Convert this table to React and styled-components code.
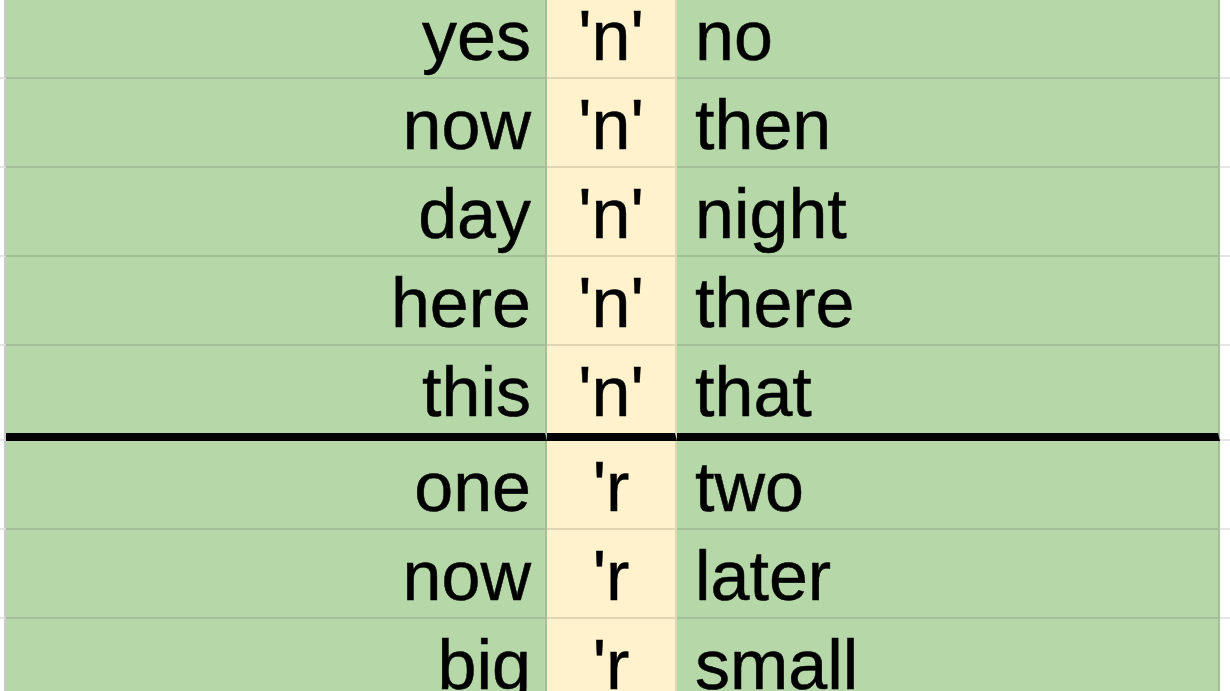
import React from "react";
import styled, { createGlobalStyle } from "styled-components";

const Global = createGlobalStyle`
  html, body { margin: 0; padding: 0; background: #ffffff; overflow: hidden; }
  #root { width: 1230px; height: 691px; overflow: hidden; }
`;

const Sheet = styled.div`
  display: flex;
  flex-direction: column;
  margin-top: -10px;
  font-family: "Liberation Sans", Arial, sans-serif;
  font-size: 70px;
  color: #000;
  -webkit-text-stroke: 0.5px #000;
`;

const Row = styled.div`
  display: grid;
  grid-template-columns: 6px 541px 130px 543px 1fr;
  height: ${(p) => (p.$thick ? 95 : 89)}px;
`;

const Cell = styled.div`
  box-sizing: border-box;
  display: flex;
  align-items: flex-end;
  line-height: 70px;
  padding-bottom: 6px;
  white-space: nowrap;
  overflow: hidden;
  background: ${(p) =>
    p.$kind === "green" ? "#b6d7a8" : p.$kind === "cream" ? "#fff2cc" : "#ffffff"};
  justify-content: ${(p) =>
    p.$align === "right" ? "flex-end" : p.$align === "center" ? "center" : "flex-start"};
  padding-left: ${(p) => (p.$align === "left" ? 18 : 0)}px;
  padding-right: ${(p) => (p.$align === "right" ? 14 : 0)}px;
  border-right: 2px solid
    ${(p) => (p.$kind === "blank" ? "#c9c9c9" : "rgba(60, 70, 50, 0.16)")};
  border-bottom: ${(p) =>
    p.$thick
      ? "8px solid #000"
      : p.$kind === "blank"
      ? "2px solid #e3e3e3"
      : "2px solid rgba(60, 70, 50, 0.16)"};
`;

const EdgeCell = styled(Cell)`
  border-right: none;
  border-bottom: 2px solid #e6e6e6;
`;

const rows = [
  ["yes", "'n'", "no"],
  ["now", "'n'", "then"],
  ["day", "'n'", "night"],
  ["here", "'n'", "there"],
  ["this", "'n'", "that", true],
  ["one", "'r", "two"],
  ["now", "'r", "later"],
  ["big", "'r", "small"],
];

export default function App() {
  return (
    <>
      <Global />
      <Sheet>
        {rows.map(([a, b, c, thick], i) => (
          <Row key={i} $thick={thick}>
            <Cell $kind="blank" />
            <Cell $kind="green" $align="right" $thick={thick}>
              {a}
            </Cell>
            <Cell $kind="cream" $align="center" $thick={thick}>
              {b}
            </Cell>
            <Cell $kind="green" $align="left" $thick={thick}>
              {c}
            </Cell>
            <EdgeCell $kind="blank" />
          </Row>
        ))}
      </Sheet>
    </>
  );
}
